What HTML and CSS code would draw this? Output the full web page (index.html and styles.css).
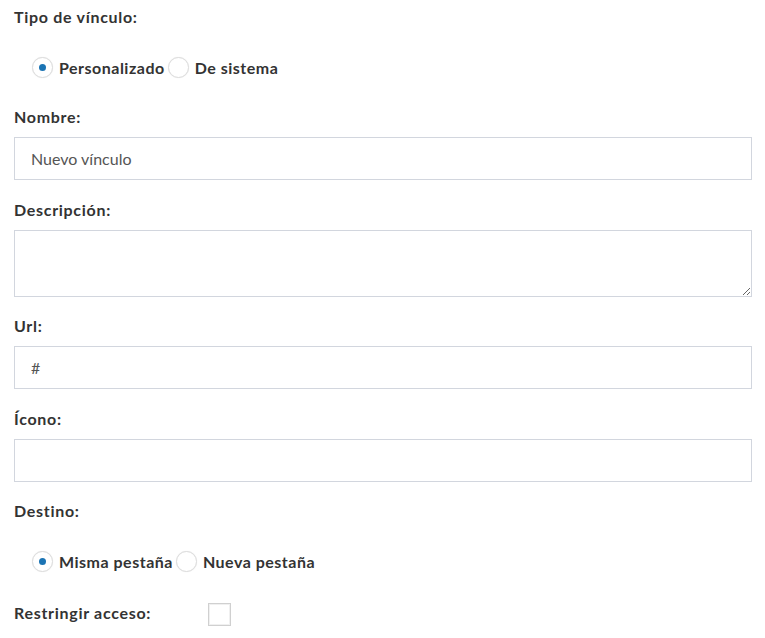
FILE: index.html
```html
<!DOCTYPE html>
<html lang="es">
<head>
    <meta charset="UTF-8">
    <title>Nuevo vínculo</title>
    <link rel="stylesheet" href="styles.css">
</head>
<body>
    <form class="link-form">
        <div class="form-group choice">
            <label class="field-label">Tipo de vínculo:</label>
            <div class="radio-row">
                <label class="radio"><input type="radio" name="tipo" checked><span>Personalizado</span></label>
                <label class="radio"><input type="radio" name="tipo"><span>De sistema</span></label>
            </div>
        </div>

        <div class="form-group">
            <label class="field-label" for="nombre">Nombre:</label>
            <input id="nombre" class="form-control" type="text" value="Nuevo vínculo">
        </div>

        <div class="form-group">
            <label class="field-label" for="descripcion">Descripción:</label>
            <textarea id="descripcion" class="form-control area"></textarea>
        </div>

        <div class="form-group">
            <label class="field-label" for="url">Url:</label>
            <input id="url" class="form-control" type="text" value="#">
        </div>

        <div class="form-group">
            <label class="field-label" for="icono">Ícono:</label>
            <input id="icono" class="form-control" type="text">
        </div>

        <div class="form-group choice">
            <label class="field-label">Destino:</label>
            <div class="radio-row">
                <label class="radio"><input type="radio" name="destino" checked><span>Misma pestaña</span></label>
                <label class="radio"><input type="radio" name="destino"><span>Nueva pestaña</span></label>
            </div>
        </div>

        <div class="restrict">
            <label class="field-label" for="restringir">Restringir acceso:</label>
            <input id="restringir" class="check" type="checkbox">
        </div>
    </form>
</body>
</html>
```

FILE: styles.css
```css
body {
    margin: 0;
    background: #fff;
    color: #333;
    font-family: Lato, "Open Sans", sans-serif;
    font-size: 16px;
}

.link-form {
    padding: 7px 13px 0 14px;
}

.form-group {
    margin-bottom: 19.5px;
}

.form-group.choice {
    margin-bottom: 29px;
}

.field-label {
    display: block;
    font-weight: bold;
    letter-spacing: 0.7px;
    line-height: 20px;
    margin-bottom: 10px;
}

.form-control {
    display: block;
    box-sizing: border-box;
    width: 100%;
    height: 43px;
    margin: 0;
    padding: 0 16px;
    border: 1px solid #d2d6de;
    border-radius: 0;
    font-family: inherit;
    font-size: 16px;
    color: #555;
    outline: 0;
}

.form-control.area {
    height: 67px;
    padding: 8px 16px;
    resize: vertical;
}

/* radio rows */
.radio-row {
    display: flex;
    align-items: center;
    padding: 19px 0 0 18px;
    height: 22px;
    gap: 3px;
}

.radio {
    display: flex;
    align-items: center;
    gap: 6px;
    font-weight: bold;
    letter-spacing: 0.5px;
    cursor: pointer;
}

.radio input {
    appearance: none;
    -webkit-appearance: none;
    box-sizing: border-box;
    width: 21px;
    height: 21px;
    margin: 0;
    border: 1px solid #dcdcdc;
    border-radius: 50%;
    background: #fff;
    box-shadow: 0 0 1px rgba(0, 0, 0, 0.1);
    display: grid;
    place-content: center;
}

.radio input:checked::before {
    content: "";
    width: 7px;
    height: 7px;
    border-radius: 50%;
    background: #1b74b4;
}

.restrict {
    display: flex;
    align-items: center;
    margin-top: -2px;
}

.restrict .field-label {
    margin: 0;
    width: 194px;
}

.check {
    appearance: none;
    -webkit-appearance: none;
    box-sizing: border-box;
    width: 23px;
    height: 23px;
    margin: 4px 0 0;
    border: 1px solid #d0d0d0;
    box-shadow: inset 0 0 0 1px #f0f0f0;
    background: #fff;
}
```
